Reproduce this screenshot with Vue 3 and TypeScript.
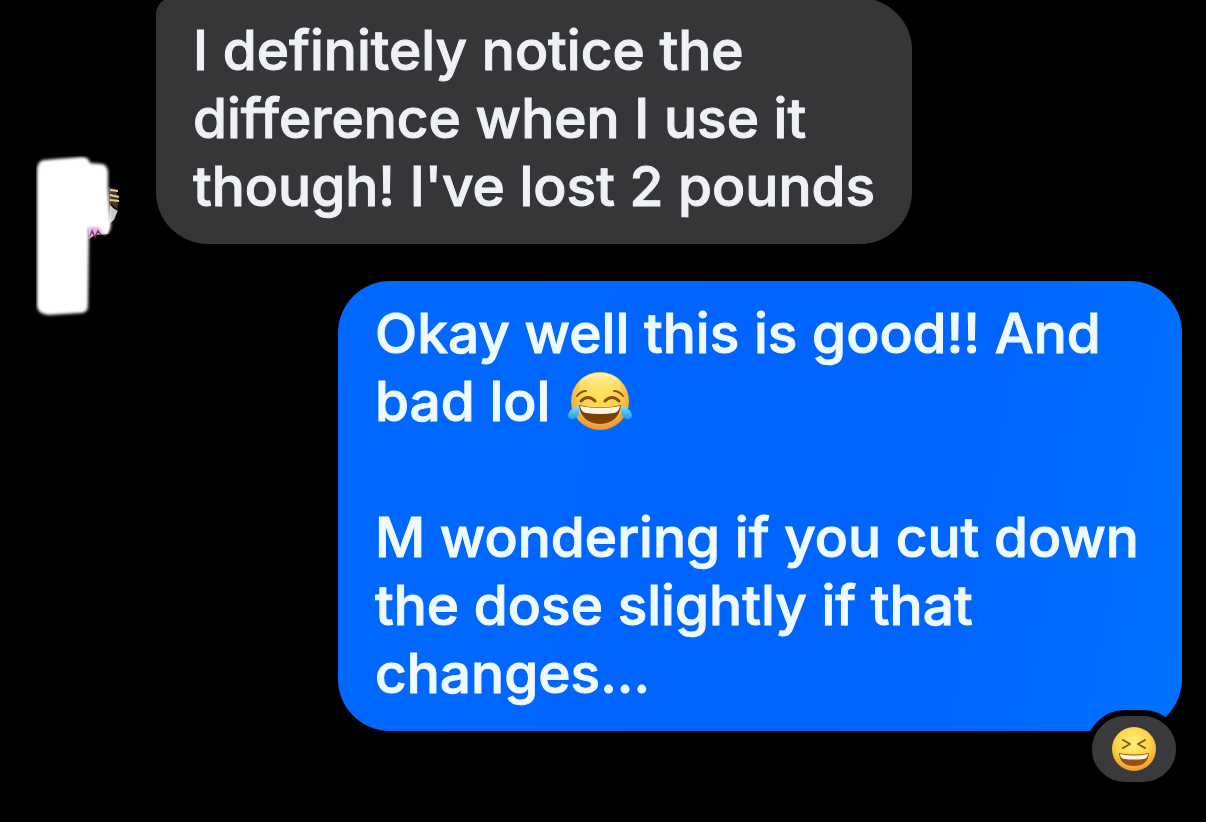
<script setup lang="ts">
interface Message {
  id: number
  side: 'incoming' | 'outgoing'
  lines: string[]
  joyLine?: number
  reaction?: boolean
}

const messages: Message[] = [
  {
    id: 1,
    side: 'incoming',
    lines: ['I definitely notice the', 'difference when I use it', "though! I've lost 2 pounds"],
  },
  {
    id: 2,
    side: 'outgoing',
    lines: [
      'Okay well this is good!! And',
      'bad lol ',
      '',
      'M wondering if you cut down',
      'the dose slightly if that',
      'changes...',
    ],
    joyLine: 1,
    reaction: true,
  },
]
</script>

<template>
  <main class="chat">
    <article v-for="m in messages" :key="m.id" class="row" :class="m.side">
      <div v-if="m.side === 'incoming'" class="avatar">
        <svg viewBox="0 0 90 164" role="img" aria-label="Contact photo">
          <defs>
            <filter id="soft" x="-10%" y="-10%" width="120%" height="120%">
              <feGaussianBlur stdDeviation="1.6" />
            </filter>
            <filter id="faint" x="-20%" y="-20%" width="140%" height="140%">
              <feGaussianBlur stdDeviation="0.6" />
            </filter>
          </defs>
          <g filter="url(#faint)">
            <path d="M72 31 L80 33 L82 42 Q83 52 78 62 L72 66Z" fill="#463626" />
            <path d="M74 34 L82 35 M74 39 L83 41 M74 44 L83 45" stroke="#e5c9a4" stroke-width="2" />
            <path d="M74 49 L82 54 L78 64 L73 68Z" fill="#c3cbc1" />
            <path d="M73 46 Q77 52 82 54" stroke="#111" stroke-width="1.5" fill="none" />
            <path d="M52 66 H74 L72 78 L59 79 L53 83Z" fill="#d9b3d3" />
            <path d="M53 82 L56 75 L59 81 L62 75 L65 79" stroke="#8d267b" stroke-width="1.5" fill="none" />
          </g>
          <g filter="url(#soft)">
            <path
              d="M8 4 L20 3 L46 1 Q53 1 54 7 L66 8 Q71 9 72 15 L72 32 L74 60 Q76 72 73 76 L68 79 L63 71 L53 71 L52 149 Q52 157 45 157 L12 159 Q1 157 1 150 V15 Q1 5 8 4Z"
              fill="#fff"
            />
          </g>
        </svg>
      </div>
      <div class="bubble">
        <p v-for="(line, i) in m.lines" :key="i" class="line">{{ line }}<svg
            v-if="m.joyLine === i"
            class="joy"
            viewBox="0 0 64 60"
            role="img"
            aria-label="Face with tears of joy"
          >
            <defs>
              <radialGradient id="joyFace" cx="50%" cy="38%" r="62%">
                <stop offset="0" stop-color="#ffe45e" />
                <stop offset="0.6" stop-color="#fdd04a" />
                <stop offset="1" stop-color="#e8932c" />
              </radialGradient>
              <linearGradient id="joyShine" x1="0" y1="0" x2="0" y2="1">
                <stop offset="0" stop-color="#fff8bd" stop-opacity="0.9" />
                <stop offset="1" stop-color="#ffe45e" stop-opacity="0" />
              </linearGradient>
              <linearGradient id="tear" x1="0" y1="0" x2="0" y2="1">
                <stop offset="0" stop-color="#8ee3fa" />
                <stop offset="1" stop-color="#1f9be8" />
              </linearGradient>
            </defs>
            <circle cx="32" cy="30" r="29" fill="url(#joyFace)" />
            <ellipse cx="32" cy="14" rx="21" ry="12" fill="url(#joyShine)" />
            <g fill="none" stroke="#8a4f0c" stroke-linecap="round">
              <path d="M9 25 Q13 20 18 20 M46 20 Q51 20 55 25" stroke-width="2" />
              <path d="M13 30 Q20 23 27 30 M37 30 Q44 23 51 30" stroke-width="3" />
            </g>
            <path d="M11 34 Q32 39 53 34 Q51 52 32 53 Q13 52 11 34Z" fill="#7c3f08" />
            <path d="M12 35 Q32 39 52 35 Q51 41 46 42 Q32 44 18 42 Q13 41 12 35Z" fill="#fff7e6" />
            <path d="M11 34 Q13 46 6 48 Q0 49 0 44 Q1 38 11 34Z" fill="url(#tear)" />
            <path d="M53 34 Q51 46 58 48 Q64 49 64 44 Q63 38 53 34Z" fill="url(#tear)" />
          </svg></p>
        <button v-if="m.reaction" type="button" class="reaction" aria-label="Laughing reaction">
          <svg viewBox="0 0 46 46" aria-hidden="true">
            <defs>
              <radialGradient id="laughFace" cx="48%" cy="36%" r="64%">
                <stop offset="0" stop-color="#fff07a" />
                <stop offset="0.6" stop-color="#fdd34a" />
                <stop offset="1" stop-color="#ed9a2b" />
              </radialGradient>
            </defs>
            <circle cx="23" cy="23" r="22" fill="url(#laughFace)" />
            <path
              d="M12 14 L19 18 L12 22 M34 14 L27 18 L34 22"
              fill="none"
              stroke="#7d5510"
              stroke-width="2"
              stroke-linecap="round"
              stroke-linejoin="round"
            />
            <path d="M8 27 Q23 30 38 27 Q37 40 23 40 Q9 40 8 27Z" fill="#935010" />
            <path d="M9 28 Q23 31 37 28 Q37 32 33 33 Q23 34 13 33 Q9 32 9 28Z" fill="#fff8e4" />
          </svg>
        </button>
      </div>
    </article>
  </main>
</template>

<style>
html,
body {
  background: #000;
}
body {
  margin: 0;
}
</style>

<style scoped>
.chat {
  box-sizing: border-box;
  display: flex;
  flex-direction: column;
  gap: 37px;
  min-height: 100vh;
  padding: 0 24px 48px 36px;
  overflow: hidden;
  background: #000;
  font-family: Inter, 'Liberation Sans', sans-serif;
}
.row {
  display: flex;
}
.incoming {
  gap: 30px;
  align-items: flex-end;
  margin-top: -2px;
}
.outgoing {
  justify-content: flex-end;
}
.avatar {
  flex: none;
  width: 90px;
  height: 164px;
  margin-bottom: -76px;
}
.avatar svg {
  display: block;
  width: 100%;
  height: 100%;
}
.bubble {
  position: relative;
  box-sizing: border-box;
  padding: 18px 37px 24px;
  border-radius: 52px;
  font-size: 55px;
  font-weight: 500;
  line-height: 68px;
  -webkit-text-stroke: 1px currentColor;
}
.incoming .bubble {
  border-top-left-radius: 16px;
  background: #363638;
  color: #eff2f4;
}
.outgoing .bubble {
  width: 844px;
  max-width: 100%;
  background: linear-gradient(100deg, #0069ff, #0064ff 50%, #0066ff 75%, #0072ff);
  color: #effaff;
}
.line {
  min-height: 68px;
  margin: 0;
  white-space: pre-wrap;
}
.joy {
  width: 64px;
  height: 60px;
  margin-left: 3px;
  vertical-align: -10px;
}
.reaction {
  position: absolute;
  right: 0;
  bottom: -57px;
  display: flex;
  align-items: center;
  justify-content: center;
  box-sizing: border-box;
  width: 96px;
  height: 78px;
  padding: 0;
  border: 6px solid #000;
  border-radius: 40px;
  background: #3a3a3c;
}
.reaction svg {
  width: 46px;
  height: 46px;
}
</style>
